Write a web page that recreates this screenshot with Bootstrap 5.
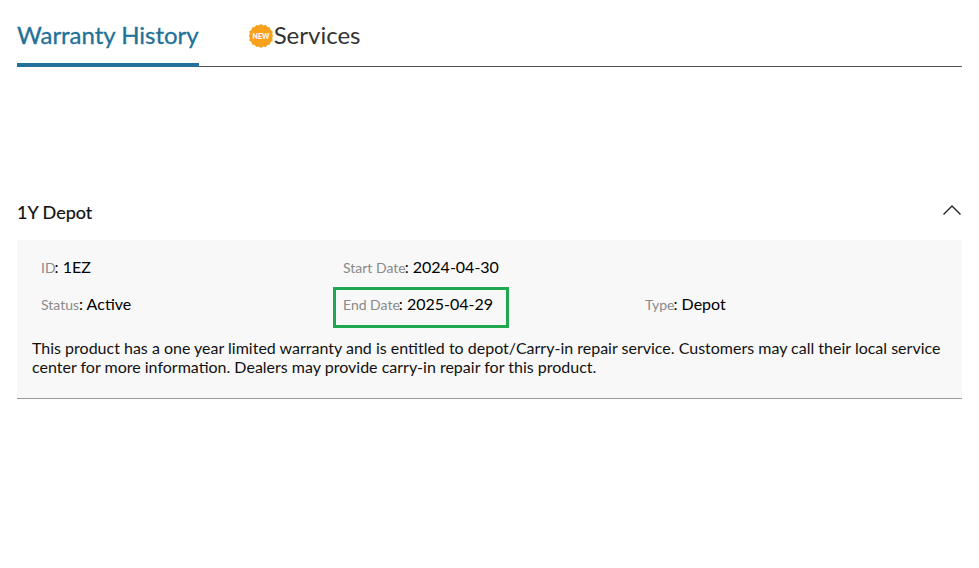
<!DOCTYPE html>
<html lang="en">
<head>
<meta charset="utf-8">
<title>Warranty History</title>
<link href="https://cdn.jsdelivr.net/npm/bootstrap@5.3.0/dist/css/bootstrap.min.css" rel="stylesheet">
<style>
body{font-family:Lato,"Liberation Sans",sans-serif;background:#fff;color:#000;padding:0 17px}
.tabbar{border-bottom:1px solid #555;height:67px;gap:50px}
.tabitem{font-size:24px;line-height:30px;padding-top:20px;height:67px;color:#333}
.tabitem.on{color:#22719a;letter-spacing:-.02px;border-bottom:4px solid #22719a;-webkit-text-stroke:.3px #22719a}
.newicon{width:24px;height:24px;display:block;margin:4px 1px 0 0}
.headrow{margin-top:132px;height:41px}
.headtitle{font-size:18px;line-height:26px;color:#111;-webkit-text-stroke:.2px #111}
.chev{width:20px;height:12px;display:block;margin-top:5px}
.wbody{background:#f8f8f8;border-bottom:1px solid #999;height:159px;padding:15px 15px 0}
.fgrid{display:grid;grid-template-columns:repeat(3,302px);padding-left:9px;row-gap:13px}
.fcell{font-size:16px;line-height:24px;position:relative;height:24px;white-space:nowrap}
.flabel{font-size:14px;color:#8a8a8a;margin-right:-1px}
.flabel.flush{margin-right:0}
.hilite{position:absolute;left:-10px;top:-5px;width:176px;height:41px;border:3px solid #1fa84f}
.wdesc{font-size:16px;line-height:19px;margin:22px 0 0;color:#111}
</style>
</head>
<body>
<nav class="tabbar d-flex">
  <div class="tabitem on">Warranty History</div>
  <div class="tabitem d-flex">
    <svg class="newicon" viewBox="0 0 24 24" aria-hidden="true">
      <polygon fill="#f9a11b" points="12,0 14.2,1.6 16.8,1 18.4,3.1 21,3.4 21.6,6 23.8,7.4 23.2,10 24,12 23.2,14 23.800,16.600 21.6,18 21,20.6 18.4,20.9 16.8,23 14.2,22.4 12,24 9.8,22.4 7.2,23 5.6,20.9 3,20.6 2.4,18 .2,16.6 .8,14 0,12 .8,10 .2,7.4 2.4,6 3,3.4 5.6,3.1 7.2,1 9.8,1.6"/>
      <text x="12" y="14.6" text-anchor="middle" font-family="Lato,'Liberation Sans',sans-serif" font-size="7" font-weight="900" fill="#fff">NEW</text>
    </svg>
    <span>Services</span>
  </div>
</nav>
<div class="headrow d-flex justify-content-between align-items-start">
  <div class="headtitle">1Y Depot</div>
  <svg class="chev" viewBox="0 0 20 12" aria-hidden="true"><path d="M1.5 10.5 10 2l8.500 8.500" fill="none" stroke="#222" stroke-width="1.400"/></svg>
</div>
<section class="wbody">
  <div class="fgrid">
    <div class="fcell"><span class="flabel">ID</span>: 1EZ</div>
    <div class="fcell"><span class="flabel">Start Date</span>: 2024-04-30</div>
    <div class="fcell"></div>
    <div class="fcell"><span class="flabel flush">Status</span>: Active</div>
    <div class="fcell"><span class="flabel">End Date</span>: 2025-04-29<span class="hilite"></span></div>
    <div class="fcell"><span class="flabel">Type</span>: Depot</div>
  </div>
  <p class="wdesc">This product has a one year limited warranty and is entitled to depot/Carry-in repair service. Customers may call their local service center for more information. Dealers may provide carry-in repair for this product.</p>
</section>
</body>
</html>
